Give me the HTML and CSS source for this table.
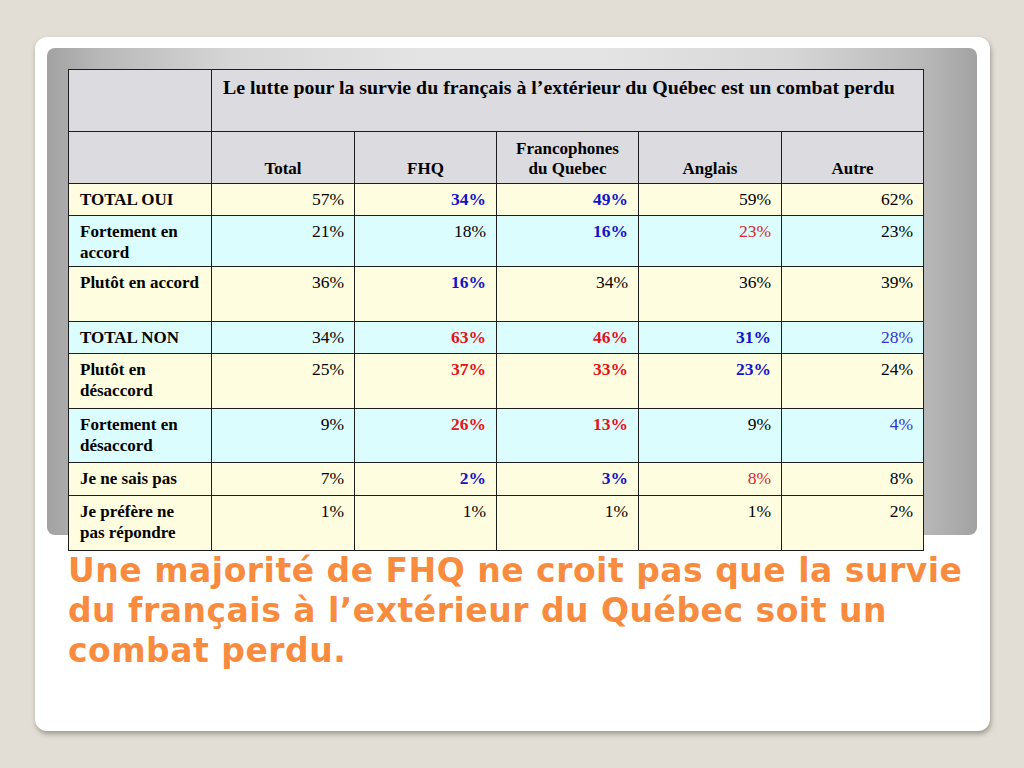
FILE: index.html
```html
<!DOCTYPE html>
<html lang="fr">
<head>
<meta charset="utf-8">
<title>Sondage</title>
<link rel="stylesheet" href="styles.css">
</head>
<body>
<div class="card">
  <div class="panel">
    <table class="data">
      <colgroup>
        <col class="c1"><col class="c2"><col class="c3"><col class="c4"><col class="c5"><col class="c6">
      </colgroup>
      <tr class="h1">
        <th class="blank"></th>
        <th class="title" colspan="5">Le lutte pour la survie du français à l’extérieur du Québec est un combat perdu</th>
      </tr>
      <tr class="h2">
        <th class="blank"></th>
        <th>Total</th>
        <th>FHQ</th>
        <th>Francophones<br>du Quebec</th>
        <th>Anglais</th>
        <th>Autre</th>
      </tr>
      <tr class="y r32">
        <th class="lab">TOTAL OUI</th>
        <td>57%</td><td class="bb">34%</td><td class="bb">49%</td><td>59%</td><td>62%</td>
      </tr>
      <tr class="c r51">
        <th class="lab">Fortement en<br>accord</th>
        <td>21%</td><td>18%</td><td class="bb">16%</td><td class="nr">23%</td><td>23%</td>
      </tr>
      <tr class="y r55">
        <th class="lab">Plutôt en accord</th>
        <td>36%</td><td class="bb">16%</td><td>34%</td><td>36%</td><td>39%</td>
      </tr>
      <tr class="c r32">
        <th class="lab">TOTAL NON</th>
        <td>34%</td><td class="br">63%</td><td class="br">46%</td><td class="bb">31%</td><td class="nb">28%</td>
      </tr>
      <tr class="y r55">
        <th class="lab">Plutôt en<br>désaccord</th>
        <td>25%</td><td class="br">37%</td><td class="br">33%</td><td class="bb">23%</td><td>24%</td>
      </tr>
      <tr class="c r54">
        <th class="lab">Fortement en<br>désaccord</th>
        <td>9%</td><td class="br">26%</td><td class="br">13%</td><td>9%</td><td class="nb">4%</td>
      </tr>
      <tr class="y r33">
        <th class="lab">Je ne sais pas</th>
        <td>7%</td><td class="bb">2%</td><td class="bb">3%</td><td class="nr">8%</td><td>8%</td>
      </tr>
      <tr class="y r55">
        <th class="lab">Je préfère ne<br>pas répondre</th>
        <td>1%</td><td>1%</td><td>1%</td><td>1%</td><td>2%</td>
      </tr>
    </table>
  </div>
  <h1 class="headline">Une majorité de FHQ ne croit pas que la survie du français à l’extérieur du Québec soit un combat perdu.</h1>
</div>
</body>
</html>
```

FILE: styles.css
```css
html, body {
  margin: 0;
  padding: 0;
}
body {
  background: #e2ded5;
  width: 1024px;
  height: 768px;
  overflow: hidden;
  font-family: "Liberation Serif", "Times New Roman", serif;
}
.card {
  margin: 37px 0 0 35px;
  width: 955px;
  height: 694px;
  box-sizing: border-box;
  padding: 11px 13px 0 12px;
  background: #ffffff;
  border-radius: 12px;
  box-shadow: 1px 3px 5px rgba(90, 85, 75, 0.5);
}
.panel {
  height: 487px;
  box-sizing: border-box;
  padding: 21px 0 0 21px;
  border-radius: 8px;
  background: linear-gradient(to right, #a2a2a2 0%, #b9b9b9 6%, #d6d6d6 20%, #e4e4e4 40%, #e4e4e4 60%, #d6d6d6 80%, #b9b9b9 94%, #a2a2a2 100%);
}
.data {
  border-collapse: collapse;
  table-layout: fixed;
  width: 855px;
  font-size: 17px;
  line-height: 21px;
  color: #000;
}
.c1, .c2 { width: 143px; }
.c3, .c4 { width: 142px; }
.c5 { width: 143px; }
.c6 { width: 142px; }
.data th, .data td {
  border: 1px solid #1e1e1e;
  padding: 0;
}
.h1 { height: 62px; }
.h2 { height: 52px; }
.h1 th, .h2 th {
  background: #dcdce0;
}
.h1 .title {
  text-align: left;
  vertical-align: top;
  padding: 5px 10px 0 11px;
  font-weight: bold;
  font-size: 19.85px;
  line-height: 24px;
}
.h2 th {
  vertical-align: bottom;
  padding-bottom: 4px;
  font-weight: bold;
  font-size: 17px;
  line-height: 20px;
}
.y th, .y td { background: #fffde0; }
.c th, .c td { background: #dcfdfe; }
.r32 { height: 32px; }
.r33 { height: 33px; }
.r51 { height: 51px; }
.r54 { height: 54px; }
.r55 { height: 55px; }
.data .lab {
  text-align: left;
  vertical-align: top;
  font-weight: bold;
  padding: 5px 2px 0 11px;
}
.data td {
  text-align: right;
  vertical-align: top;
  padding: 5px 10px 0 4px;
  font-size: 17.5px;
}
.data td.bb { color: #1414c8; font-weight: bold; }
.data td.br { color: #e6121a; font-weight: bold; }
.data td.nr { color: #d8262a; }
.data td.nb { color: #3434d4; }
.headline {
  margin: 16px 0 0 21px;
  font-family: "DejaVu Sans", Verdana, sans-serif;
  font-weight: bold;
  font-size: 33px;
  letter-spacing: 0.5px;
  line-height: 40px;
  color: #f98b3e;
  width: 910px;
}
```
